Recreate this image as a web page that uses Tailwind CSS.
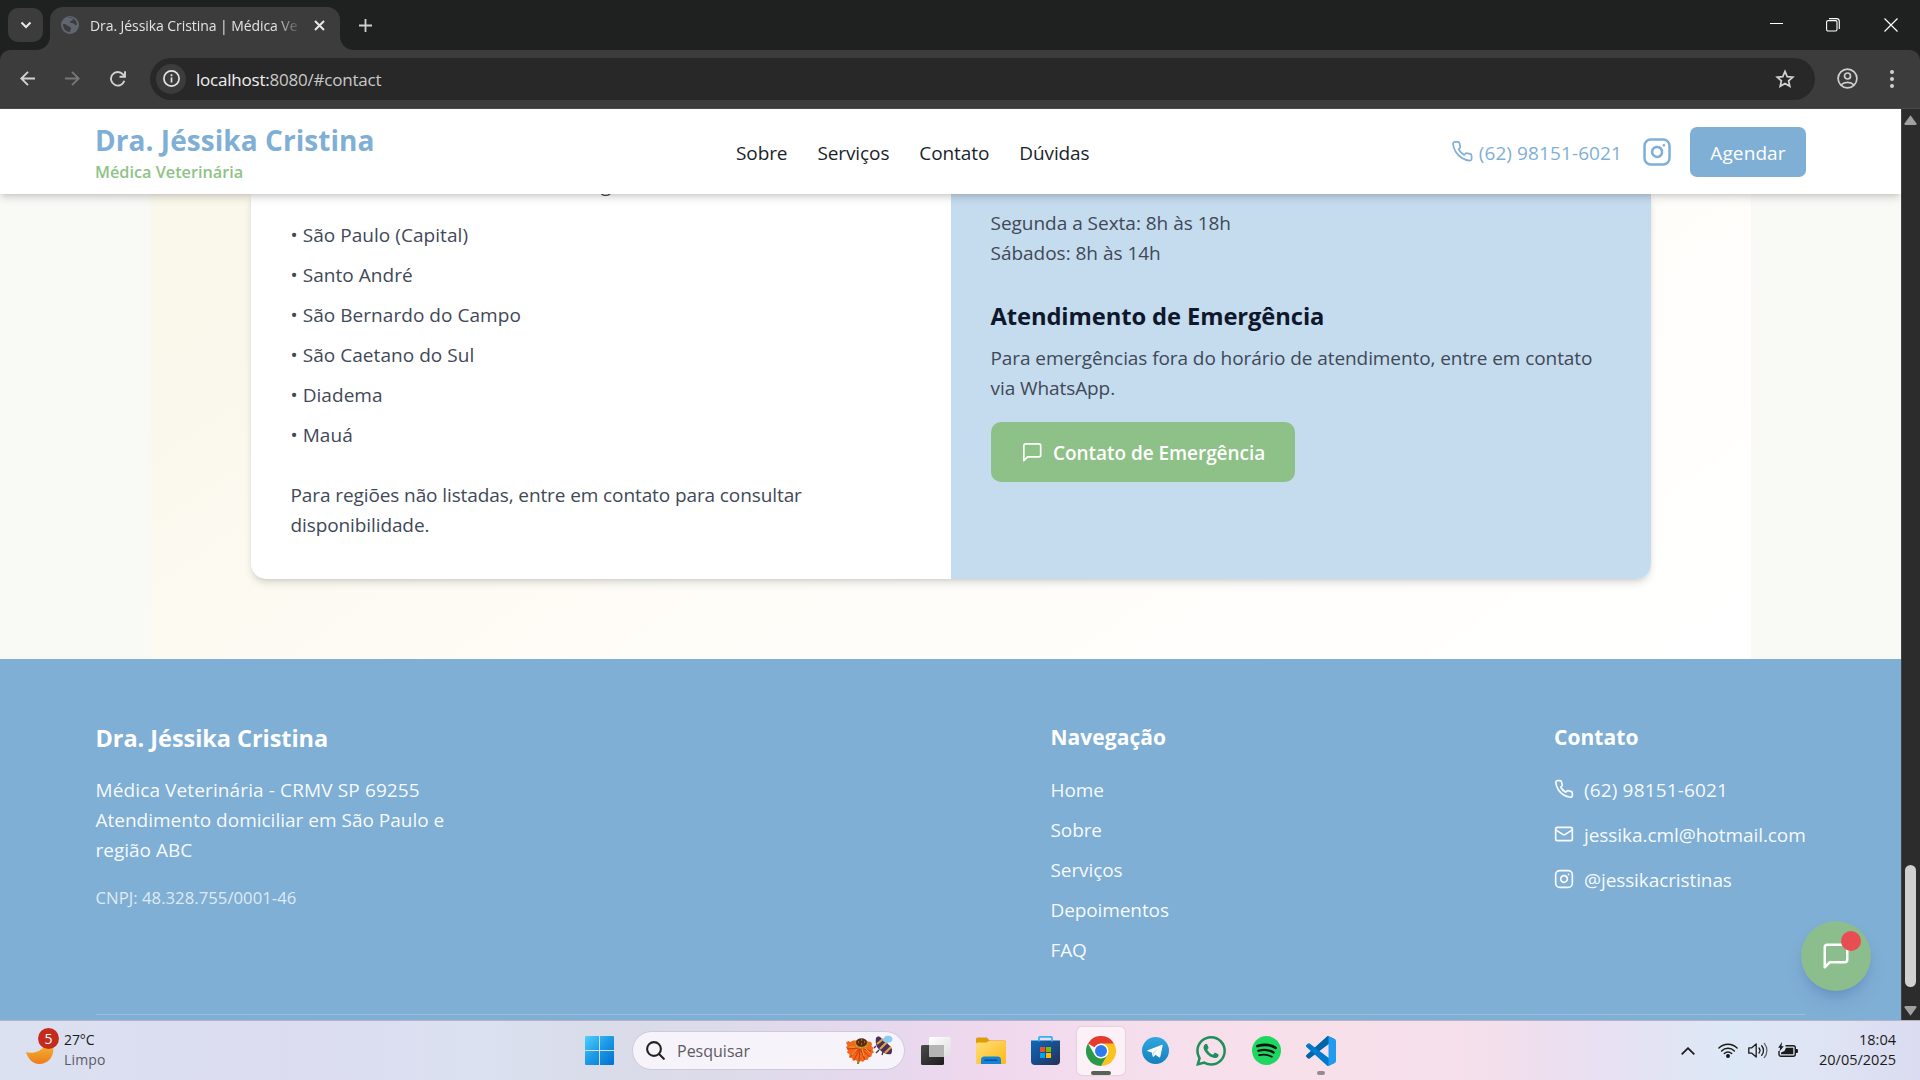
<!DOCTYPE html>
<html lang="pt-BR">
<head>
<meta charset="utf-8">
<title>Dra. Jéssika Cristina | Médica Veterinária</title>
<script src="https://cdn.jsdelivr.net/npm/@tailwindcss/browser@4"></script>
</head>
<body class="w-[1920px] h-[1080px] overflow-hidden flex flex-col font-['Open_Sans',sans-serif] bg-[#1f2120]">

<svg width="0" height="0" class="absolute">
  <defs>
    <symbol id="phone" viewBox="0 0 24 24"><path d="M22 16.92v3a2 2 0 0 1-2.18 2 19.79 19.79 0 0 1-8.63-3.07 19.5 19.5 0 0 1-6-6 19.79 19.79 0 0 1-3.07-8.67A2 2 0 0 1 4.11 2h3a2 2 0 0 1 2 1.72 12.84 12.84 0 0 0 .7 2.81 2 2 0 0 1-.45 2.11L8.09 9.91a16 16 0 0 0 6 6l1.27-1.27a2 2 0 0 1 2.11-.45 12.84 12.84 0 0 0 2.81.7A2 2 0 0 1 22 16.92z"/></symbol>
    <symbol id="insta" viewBox="0 0 24 24"><rect width="20" height="20" x="2" y="2" rx="5" ry="5"/><path d="M16 11.37A4 4 0 1 1 12.63 8 4 4 0 0 1 16 11.37z"/><path d="M17.5 6.5h.01"/></symbol>
    <symbol id="mail" viewBox="0 0 24 24"><rect width="20" height="16" x="2" y="4" rx="2"/><path d="m22 7-8.97 5.7a1.94 1.94 0 0 1-2.06 0L2 7"/></symbol>
    <symbol id="msg" viewBox="0 0 24 24"><path d="M21 15a2 2 0 0 1-2 2H7l-4 4V5a2 2 0 0 1 2-2h14a2 2 0 0 1 2 2z"/></symbol>
  </defs>
</svg>

<!-- Tab strip -->
<div class="h-[50px] shrink-0 flex items-end bg-[#1f2120] text-[#e3e3e3]">
  <div class="w-[50px] h-full relative">
    <button class="ml-2 mt-2 w-[35px] h-[34px] rounded-[10px] bg-[#3c3c3c] flex items-center justify-center">
      <svg class="w-[12px] h-[8px]" viewBox="0 0 12 8" fill="none" stroke="#e8e8e8" stroke-width="2"><path d="M1.5 1.5 6 6l4.500-4.500"/></svg>
    </button>
    <svg class="absolute right-0 bottom-0 w-[14px] h-[14px]" viewBox="0 0 14 14"><path d="M14 0v14H0C8 14 14 8 14 0z" fill="#3c3c3c"/></svg>
  </div>
  <div class="relative w-[290px] h-[43px] rounded-t-[13px] bg-[#3c3c3c] flex items-center pl-[11px] pb-[7px]">
    <svg class="w-[18px] h-[18px]" viewBox="0 0 18 18"><circle cx="9" cy="9" r="9" fill="#5f6670"/><path d="M2 8c2 0 4 .5 5 2 1 1 3 .5 3 2.500 0 1-1 1.500-1 3.500-4 0-7-3-7-8zM7 2c3-1 5 0 5 1.500 0 1.500-3 1-3 2.500 0 1.300 3 .8 4 2 .8 1 2 1 3 1 0-3-2-6-5-7.300" fill="#3c3c3c"/></svg>
    <div class="ml-[11px] w-[212px] pt-[1px] text-[14px] leading-[20px] tracking-[-0.07px] whitespace-nowrap overflow-hidden [mask-image:linear-gradient(90deg,#000_185px,transparent_212px)]">Dra. Jéssika Cristina | Médica Ve</div>
    <svg class="ml-[12px] w-[11px] h-[11px]" viewBox="0 0 11 11" stroke="#e8e8e8" stroke-width="2"><path d="m1 1 9 9M10 1l-9 9"/></svg>
    <svg class="absolute -right-[14px] bottom-0 w-[14px] h-[14px]" viewBox="0 0 14 14"><path d="M0 0v14h14C6 14 0 8 0 0z" fill="#3c3c3c"/></svg>
  </div>
  <div class="self-start mt-[19px] ml-[19px]"><svg class="w-[13px] h-[13px]" viewBox="0 0 13 13" stroke="#d0d0d0" stroke-width="1.800"><path d="M6.500 0v13M0 6.500h13"/></svg></div>
  <div class="self-start ml-auto mt-[18px] mr-[22px] flex items-center">
    <svg class="w-[13px] h-[14px]" viewBox="0 0 13 14" stroke="#fff" stroke-width="1"><path d="M0 5.500h13"/></svg>
    <svg class="ml-[43px] w-[14px] h-[14px]" viewBox="0 0 14 14" fill="none" stroke="#fff" stroke-width="1.100"><rect x=".6" y="2.600" width="10.400" height="10.400" rx="1.500"/><path d="M3 .6h7.500a2.800 2.800 0 0 1 2.800 2.800V11"/></svg>
    <svg class="ml-[44px] w-[14px] h-[14px]" viewBox="0 0 14 14" stroke="#fff" stroke-width="1.200"><path d="m.5.5 13 13M13.500.5l-13 13"/></svg>
  </div>
</div>

<!-- Toolbar -->
<div class="h-[59px] shrink-0 flex items-center pb-[1px] bg-[#3c3c3c] border-b border-[#4a4848] rounded-t-[10px]">
  <svg class="ml-[20px] w-[15px] h-[15px]" viewBox="0 0 15 15" fill="none" stroke="#d2d2d2" stroke-width="1.900"><path d="M15 7.500H1.500M8 .8 1.300 7.500 8 14.200"/></svg>
  <svg class="ml-[30px] w-[15px] h-[15px]" viewBox="0 0 15 15" fill="none" stroke="#777" stroke-width="1.900"><path d="M0 7.500h13.500M7 .8l6.700 6.700L7 14.200"/></svg>
  <svg class="ml-[30px] w-[16px] h-[16px]" viewBox="0 0 16 16" fill="none" stroke="#d2d2d2" stroke-width="1.900"><path d="M14.300 9.800A6.800 6.800 0 1 1 13 3.400l2 2.100M15 .3v5.500H9.500"/></svg>
  <div class="ml-[24px] w-[1665px] h-[42px] rounded-full bg-[#282828] flex items-center">
    <div class="ml-[6px] w-[30px] h-[30px] rounded-full bg-[#3c3c3c] flex items-center justify-center">
      <svg class="w-[17px] h-[17px]" viewBox="0 0 17 17" fill="none" stroke="#e3e3e3" stroke-width="1.700"><circle cx="8.500" cy="8.500" r="7.600"/><path d="M8.500 7.500v5M8.500 4.300v1.900"/></svg>
    </div>
    <div class="ml-[10px] pt-[2px] text-[17px] leading-[24px] tracking-[-0.22px] text-[#c8c8c8]"><span class="text-[#f0f0f0]">localhost:</span>8080/#contact</div>
    <svg class="ml-auto mr-[20px] w-[20px] h-[20px]" viewBox="0 0 20 20" fill="none" stroke="#d2d2d2" stroke-width="1.700"><path d="m10 2.400 2.200 5.200 5.600.5-4.200 3.700 1.200 5.500L10 14.400l-4.800 2.900 1.200-5.500-4.200-3.700 5.600-.5z"/></svg>
  </div>
  <svg class="ml-[22px] w-[21px] h-[21px]" viewBox="0 0 21 21" fill="none" stroke="#d0d0d0" stroke-width="1.700"><circle cx="10.500" cy="10.500" r="9.400"/><circle cx="10.500" cy="8" r="3"/><path d="M4 17c3.500-3.600 9.500-3.600 13 0"/></svg>
  <svg class="ml-[32px] w-[4px] h-[18px]" viewBox="0 0 4 18" fill="#d0d0d0"><circle cx="2" cy="2" r="2"/><circle cx="2" cy="9" r="2"/><circle cx="2" cy="16" r="2"/></svg>
</div>

<!-- Viewport -->
<div class="h-[911px] shrink-0 flex">
  <div class="relative w-[1901px] h-full overflow-hidden flex flex-col bg-[#f9f9f6] text-[19px] leading-[30px] tracking-[-0.1px]">

    <header class="relative z-10 h-[85px] shrink-0 bg-white shadow-[0_5px_8px_-1px_rgb(0_0_0/0.14),0_2px_5px_-2px_rgb(0_0_0/0.12)] pl-24 pr-[95px] grid grid-cols-[640px_1fr_auto] items-center">
      <div class="-ml-px pt-[3px]">
        <div class="text-[28px] leading-[38px] tracking-[0.05px] font-bold text-[#80afd5]">Dra. Jéssika Cristina</div>
        <div class="text-[16.25px] leading-[26px] tracking-normal font-semibold text-[#8ec387]">Médica Veterinária</div>
      </div>
      <nav class="flex gap-[30px] pt-[3px] text-[#1a1f2c]"><a>Sobre</a><a>Serviços</a><a>Contato</a><a>Dúvidas</a></nav>
      <div class="flex items-center pt-[1px]">
        <a class="flex items-center text-[#80afd5]"><svg class="w-[22.5px] h-[22.5px] -mt-[2px]" fill="none" stroke="currentColor" stroke-width="1.800" stroke-linecap="round" stroke-linejoin="round"><use href="#phone"/></svg><span class="ml-[5px] pt-[2px] tracking-[0.1px]">(62) 98151-6021</span></a>
        <svg class="ml-[20px] -mt-[1px] w-[30px] h-[30px] text-[#80afd5]" fill="none" stroke="currentColor" stroke-width="2" stroke-linecap="round" stroke-linejoin="round"><use href="#insta"/></svg>
        <button class="ml-[18px] w-[116px] h-[50px] pt-[1px] rounded-[7px] bg-[#80afd5] text-white tracking-[0.1px]">Agendar</button>
      </div>
    </header>

    <main class="h-[465px] shrink-0 flex justify-center">
      <section class="w-[1600px] h-full bg-[linear-gradient(145deg,#faf8ea_0%,#faf8ec_14%,#fdfaf2_30%,#fffdf9_58%,#ffffff_100%)]">
        <div class="mx-[100px] h-[385px] rounded-b-[15px] bg-white shadow-[0_5px_8px_-1px_rgb(0_0_0/0.12),0_2px_5px_-2px_rgb(0_0_0/0.12)] flex text-[#3f4957]">
          <div class="w-[700px] px-[40px]">
            <p class="-mt-[24px] tracking-[-0.43px]">Atendimento domiciliar em toda a região:</p>
            <ul class="mt-[20px] flex flex-col gap-[10px] tracking-[0.05px]">
              <li>• São Paulo (Capital)</li><li>• Santo André</li><li>• São Bernardo do Campo</li><li>• São Caetano do Sul</li><li>• Diadema</li><li>• Mauá</li>
            </ul>
            <p class="mt-[30px]">Para regiões não listadas, entre em contato para consultar<br>disponibilidade.</p>
          </div>
          <div class="flex-1 px-[40px] pt-[14px] rounded-br-[15px] bg-[#c5dbee]">
            <p class="tracking-[-0.02px]">Segunda a Sexta: 8h às 18h<br>Sábados: 8h às 14h</p>
            <h3 class="mt-[31px] text-[23.75px] leading-[35px] tracking-[-0.1px] font-bold text-[#0f172a]">Atendimento de Emergência</h3>
            <p class="mt-[9px] tracking-[-0.08px]">Para emergências fora do horário de atendimento, entre em contato<br>via WhatsApp.</p>
            <button class="mt-[19px] w-[304px] h-[60px] pl-[30px] flex items-center rounded-[10px] bg-[#8dc187] text-white font-semibold">
              <svg class="w-[22.5px] h-[22.5px]" fill="none" stroke="currentColor" stroke-width="1.800" stroke-linecap="round" stroke-linejoin="round"><use href="#msg"/></svg>
              <span class="ml-[10px] pt-[2px] tracking-[-0.05px]">Contato de Emergência</span>
            </button>
          </div>
        </div>
      </section>
    </main>

    <footer class="flex-1 min-h-0 bg-[#80afd5] text-white pl-[95.5px] pr-[95px] pt-[60px]">
      <div class="h-[296px] grid grid-cols-[955px_503.500px_1fr] border-b border-white/20">
        <div class="pt-[2px]">
          <h3 class="text-[23.5px] leading-[35px] tracking-[-0.05px] font-bold">Dra. Jéssika Cristina</h3>
          <p class="mt-[19px] text-white/95 tracking-normal"><span class="tracking-[0.12px]">Médica Veterinária - CRMV SP 69255</span><br>Atendimento domiciliar em São Paulo e<br>região ABC</p>
          <p class="mt-[20px] text-[16.700px] leading-[25px] tracking-[0.03px] text-white/75">CNPJ: 48.328.755/0001-46</p>
        </div>
        <div class="pt-[1px]">
          <h4 class="mb-[20px] text-[21px] leading-[35px] tracking-[0.05px] font-bold">Navegação</h4>
          <ul class="flex flex-col gap-[10px] text-white/95"><li>Home</li><li>Sobre</li><li>Serviços</li><li>Depoimentos</li><li>FAQ</li></ul>
        </div>
        <div class="pt-[1px]">
          <h4 class="mb-[20px] text-[21px] leading-[35px] tracking-[0.05px] font-bold">Contato</h4>
          <ul class="flex flex-col gap-[15px] text-white/95 whitespace-nowrap">
            <li class="flex items-center gap-[10px]"><svg class="-mt-[2px] w-5 h-5 shrink-0" fill="none" stroke="currentColor" stroke-width="2" stroke-linecap="round" stroke-linejoin="round"><use href="#phone"/></svg><span class="tracking-[0.15px]">(62) 98151-6021</span></li>
            <li class="flex items-center gap-[10px]"><svg class="-mt-[2px] w-5 h-5 shrink-0" fill="none" stroke="currentColor" stroke-width="2" stroke-linecap="round" stroke-linejoin="round"><use href="#mail"/></svg><span class="tracking-[-0.06px]">jessika.cml@hotmail.com</span></li>
            <li class="flex items-center gap-[10px]"><svg class="-mt-[2px] w-5 h-5 shrink-0" fill="none" stroke="currentColor" stroke-width="2" stroke-linecap="round" stroke-linejoin="round"><use href="#insta"/></svg><span>@jessikacristinas</span></li>
          </ul>
        </div>
      </div>
    </footer>

    <!-- Floating chat button -->
    <button class="absolute z-20 right-[30px] bottom-[29px] w-[70px] h-[70px] rounded-full bg-[#8cbd8c] text-white flex items-center justify-center shadow-[0_12px_18px_-3px_rgb(60_90_160/0.22),0_5px_8px_-4px_rgb(60_90_160/0.25)]">
      <svg class="w-[30px] h-[30px]" fill="none" stroke="currentColor" stroke-width="2" stroke-linecap="round" stroke-linejoin="round"><use href="#msg"/></svg>
      <span class="absolute top-[10px] right-[10px] w-5 h-5 rounded-full bg-[#e84e51]"></span>
    </button>
  </div>

  <!-- Scrollbar -->
  <div class="flex-1 bg-[#2c2c2c] border-l border-[#424242] flex flex-col items-center">
    <svg class="mt-[6px] w-[13px] h-[10px] mr-px" viewBox="0 0 13 10" fill="#a0a0a0"><path d="M6.500.3 12.500 8.500Q12.800 10 11.500 10h-10Q.2 10 .5 8.500z"/></svg>
    <div class="mt-[740px] w-[11px] h-[122px] rounded-full bg-[#d0d0d0] mr-px"></div>
    <svg class="mt-[19px] w-[13px] h-[10px] mr-px" viewBox="0 0 13 10" fill="#a0a0a0"><path d="M6.500 9.700.5 1.500Q.2 0 1.500 0h10q1.300 0 1 1.500z"/></svg>
  </div>
</div>

<!-- Taskbar -->
<div class="relative h-[60px] shrink-0 border-t border-[#b5b3c3] flex items-center bg-[linear-gradient(90deg,#dbe1f1_0%,#dcdcf0_15%,#dbe1f1_25%,#d9dce9_31%,#dddbea_38%,#e6d8ee_46%,#efd8ee_51%,#f6dfec_60%,#f8e0ea_70%,#f3dfec_78%,#e8e0f2_83%,#dde8f6_90%,#dfe4f4_95%,#dadbf0_100%)] text-[#1b1b1b]">
  <div class="w-[585px] h-full flex pl-[26px]">
    <div class="relative w-[38px] h-full">
      <svg class="absolute top-[25px] left-0 w-[28px] h-[18px]" viewBox="0 0 28 18"><defs><linearGradient id="mo" x1="0" y1="0" x2="0" y2="1"><stop offset="0" stop-color="#f5b32f"/><stop offset="1" stop-color="#ec7a1c"/></linearGradient></defs><path d="M0 6c6 2 15 0 18-6h9c2 9-4 18-14 18C7 18 2 13 0 6z" fill="url(#mo)"/></svg>
      <div class="absolute top-[7px] left-[12px] w-[21px] h-[21px] rounded-full bg-[#c42b1c] text-white text-[14px] leading-[21px] text-center">5</div>
    </div>
    <div class="pt-[9px] text-[14px] leading-[20px]"><div class="tracking-[-0.1px]">27°C</div><div class="text-[#5c5c66] tracking-[0.15px]">Limpo</div></div>
  </div>
  <svg class="w-[29px] h-[29px]" viewBox="0 0 29 29"><defs><linearGradient id="wn" x1="0" y1="0" x2="1" y2="1"><stop offset="0" stop-color="#4fd0fb"/><stop offset=".5" stop-color="#1b98e6"/><stop offset="1" stop-color="#0270d0"/></linearGradient></defs><path fill="url(#wn)" d="M1 0h13v14H0V1a1 1 0 0 1 1-1zM15 0h13a1 1 0 0 1 1 1v13H15zM0 15h14v14H1a1 1 0 0 1-1-1zM15 15h14v13a1 1 0 0 1-1 1H15z"/></svg>
  <div class="ml-[18px] -mt-px w-[273px] h-[39px] rounded-full bg-[#f6f3fa] border border-[#cfc9dc] flex items-center pl-[13px] pr-[11px]">
    <svg class="w-[19px] h-[19px]" viewBox="0 0 19 19" fill="none" stroke="#222" stroke-width="2.100" stroke-linecap="round"><circle cx="8" cy="8" r="6.900"/><path d="m13 13 4.800 4.800"/></svg>
    <span class="ml-[12px] text-[16px] leading-[24px] pt-[1px] text-[#5d5b62]">Pesquisar</span>
    <svg class="ml-auto w-[48px] h-[30px]" viewBox="0 0 48 30">
      <path d="M14 22c1 3-1 5-1 7" stroke="#5d8a2c" stroke-width="2" fill="none"/>
      <path d="M1 7.500 3.500 6l2 1L8 5.500h13l2 1 3 .500 1 2-.500 2 2 2-1 2 1.500 2.500-2 1-.500 3-2.500.500-1.500 3-2.500-.500L18 27l-2-1-3 1.500-2-2.500-3 1-1-3-3-.500.500-3-2.500-2L3 15l-2-2.500 1.500-2z" fill="#f0681c"/>
      <path d="M15 13 5 22M15 13l-6 12M15 13l-1 13M15 13l5 12M15 13l10 9M15 13l11 3M15 13 2 14" stroke="#cf3a14" stroke-width="1"/>
      <path d="M10 12 4 12M12 14l-5 6M17 14l2 7M20 13l5 5" stroke="#ff9a35" stroke-width="1"/>
      <ellipse cx="16.500" cy="9" rx="7" ry="5" fill="#c98a1f"/><ellipse cx="16.500" cy="7.500" rx="5.500" ry="4.200" fill="#5b2b14"/><path d="M13 7h1M16 5h1M19 7h1M16 9h1M11 11h1M15 12.500h1M20 11.500h1" stroke="#e5ac3c" stroke-width="1"/>
      <path d="M31 3c1-2 4-2 5 0l3 2 6 6c2 2 3 5 1 8-4 1-8-1-11-4-3-2-5-6-4-12z" fill="#4a2f5c"/><path d="m32 9 6-5M35 14l7-7M40 18l6-6" stroke="#e5a33d" stroke-width="2.200"/>
      <path d="M38 6c0-4 3-6 7-5 3 1 3 4 1 6-3 1-6 1-8-1z" fill="#8acaf5"/>
      <path d="m31 11-2 2M34 15l-3 3M38 17l-1 3" stroke="#4a2f5c" stroke-width="1.400"/>
    </svg>
  </div>
  <!-- Task view -->
  <div class="ml-[7px] w-12 h-12 flex items-center justify-center"><svg class="w-[30px] h-[28px]" viewBox="0 0 30 28"><defs><linearGradient id="tv" x1="0" y1="0" x2="1" y2="1"><stop offset="0" stop-color="#4b4b4b"/><stop offset="1" stop-color="#1c1c1c"/></linearGradient><linearGradient id="tw" x1="0" y1="0" x2="1" y2="1"><stop offset="0" stop-color="#fff"/><stop offset="1" stop-color="#dedede"/></linearGradient></defs><rect y="8" width="23" height="20" rx="1.500" fill="url(#tv)"/><rect x="8" y="0" width="22" height="20" rx="1.500" fill="url(#tw)"/><path d="M8 8h15v12H9.500A1.500 1.500 0 0 1 8 18.500z" fill="#b5b5b5"/></svg></div>
  <!-- Explorer -->
  <div class="ml-[7px] w-12 h-12 flex items-center justify-center"><svg class="w-[30px] h-[27px]" viewBox="0 0 30 27"><defs><linearGradient id="fo" x1="0" y1="0" x2="1" y2="1"><stop offset="0" stop-color="#ffde7c"/><stop offset="1" stop-color="#fdb913"/></linearGradient></defs><path d="M0 2a1.500 1.500 0 0 1 1.500-1.500H10q1 0 1.600.7L13.500 3.500H28.500A1.500 1.500 0 0 1 30 5v5H0z" fill="#dc9d09"/><path d="M0 7q0-1.500 1.500-1.500H10q1 0 2-1l.5-.6H28.500q1.500 0 1.500 1.500V25.500Q30 27 28.500 27h-27Q0 27 0 25.500z" fill="url(#fo)"/><path d="M5 27v-4a3.500 3.500 0 0 1 3.500-3.500h13A3.500 3.500 0 0 1 25 23v4z" fill="#1583d8"/><path d="M8.500 23.200h13" stroke="#0c4f94" stroke-width="1.400"/></svg></div>
  <!-- Store -->
  <div class="ml-[6px] mr-px w-12 h-12 flex items-center justify-center"><svg class="w-[29px] h-[29px]" viewBox="0 0 29 29"><defs><linearGradient id="st" x1="0" y1="0" x2="1" y2="1"><stop offset="0" stop-color="#0a6abf"/><stop offset="1" stop-color="#263056"/></linearGradient></defs><path d="M0 4.500h29V25a4 4 0 0 1-4 4H4a4 4 0 0 1-4-4z" fill="url(#st)"/><path d="M8 5.500V2q0-1.200 1.200-1.200h10.600Q21 .8 21 2v3.500" fill="none" stroke="#2ab8f2" stroke-width="1.800"/><path d="M9 11h5v5H9z" fill="#f25022"/><path d="M15 11h5v5h-5z" fill="#7fba00"/><path d="M9 17h5v5H9z" fill="#00a4ef"/><path d="M15 17h5v5h-5z" fill="#ffb900"/></svg></div>
  <!-- Chrome -->
  <div class="relative ml-[7px] w-12 h-12 rounded-[5px] bg-[#fcf1f7] shadow-[0_0_2px_rgb(0_0_0/0.2)] flex items-center justify-center">
    <svg class="w-[30px] h-[30px]" viewBox="0 0 48 48"><path d="M24 24 3.200 12A24 24 0 0 1 44.800 12z" fill="#e53a2e"/><path d="M24 12h20.800A24 24 0 0 1 24 48l10.400-18z" fill="#fcc31e"/><path d="M13.600 30 3.200 12A24 24 0 0 0 24 48l10.400-18z" fill="#2a9a48"/><circle cx="24" cy="24" r="12" fill="#fff"/><circle cx="24" cy="24" r="9.600" fill="#2f7bea"/></svg>
    <span class="absolute bottom-0 left-[14px] w-5 h-1 rounded-full bg-[#566354]"></span>
  </div>
  <!-- Telegram -->
  <div class="ml-[6px] mr-px w-12 h-12 flex items-center justify-center"><svg class="w-[27px] h-[27px]" viewBox="0 0 24 24"><defs><linearGradient id="tg" x1="0" y1="0" x2="0" y2="1"><stop offset="0" stop-color="#30a8e0"/><stop offset="1" stop-color="#1580bd"/></linearGradient></defs><circle cx="12" cy="12" r="12" fill="url(#tg)"/><path d="M5 11.800 17.300 7c.7-.2 1.200.2 1 1.100l-2 9.300c-.2.800-.7 1-1.300.6l-3-2.200-1.500 1.500c-.4.400-.9.300-1-.300l-.8-3.200-3.500-1.100c-.7-.2-.7-.7-.2-.9z" fill="#fff"/><path d="m9.500 14 5.500-4.500-4.500 5-.4 2.500z" fill="#b5d7ea"/></svg></div>
  <!-- WhatsApp -->
  <div class="ml-[7px] w-12 h-12 flex items-center justify-center"><svg class="w-[30px] h-[30px]" viewBox="0 0 24 24" fill="#1f8f5c"><path d="M17.472 14.382c-.297-.149-1.758-.867-2.030-.967-.273-.099-.471-.148-.670.150-.197.297-.767.966-.940 1.164-.173.199-.347.223-.644.075-.297-.150-1.255-.463-2.390-1.475-.883-.788-1.480-1.761-1.653-2.059-.173-.297-.018-.458.130-.606.134-.133.298-.347.446-.520.149-.174.198-.298.298-.497.099-.198.050-.371-.025-.520-.075-.149-.669-1.612-.916-2.207-.242-.579-.487-.500-.669-.510-.173-.008-.371-.010-.570-.010-.198 0-.520.074-.792.372-.272.297-1.040 1.016-1.040 2.479 0 1.462 1.065 2.875 1.213 3.074.149.198 2.096 3.200 5.077 4.487.709.306 1.262.489 1.694.625.712.227 1.360.195 1.871.118.571-.085 1.758-.719 2.006-1.413.248-.694.248-1.289.173-1.413-.074-.124-.272-.198-.570-.347m-5.421 7.403h-.004a9.870 9.870 0 01-5.031-1.378l-.361-.214-3.741.982.998-3.648-.235-.374a9.860 9.860 0 01-1.510-5.260c.001-5.450 4.436-9.884 9.888-9.884 2.640 0 5.122 1.030 6.988 2.898a9.825 9.825 0 012.893 6.994c-.003 5.450-4.437 9.884-9.885 9.884m8.413-18.297A11.815 11.815 0 0012.050 0C5.495 0 .160 5.335.157 11.892c0 2.096.547 4.142 1.588 5.945L.057 24l6.305-1.654a11.882 11.882 0 005.683 1.448h.005c6.554 0 11.890-5.335 11.893-11.893a11.821 11.821 0 00-3.480-8.413z"/></svg></div>
  <!-- Spotify -->
  <div class="ml-[7px] w-12 h-12 flex items-center justify-center"><svg class="w-[29px] h-[29px]" viewBox="0 0 24 24" fill="none" stroke="#111" stroke-linecap="round"><circle cx="12" cy="12" r="12" fill="#1ed760" stroke="none"/><path d="M4.500 8.300c5-1.500 11-.9 15 1.500" stroke-width="2.300"/><path d="M5.300 12.200c4.200-1.200 9-.7 12.600 1.400" stroke-width="1.900"/><path d="M5.900 15.900c3.600-1 7.400-.5 10.500 1.300" stroke-width="1.500"/></svg></div>
  <!-- VS Code -->
  <div class="relative ml-[7px] w-12 h-12 flex items-center justify-center"><svg class="w-[30px] h-[30px]" viewBox="0 0 100 100"><path d="M96.500 10.800 75.900.9a6.200 6.200 0 0 0-7.100 1.200L1.300 63.700a4.200 4.200 0 0 0 0 6.200l5.500 5a4.200 4.200 0 0 0 5.300.2L93.400 13.400c2.700-2 6.600-.1 6.600 3.300v-.2a6.300 6.300 0 0 0-3.500-5.700z" fill="#0065a9"/><path d="m96.500 89.200-20.600 9.900a6.200 6.200 0 0 1-7.100-1.200L1.300 36.300a4.200 4.200 0 0 1 0-6.200l5.500-5a4.200 4.200 0 0 1 5.300-.2l81.300 61.700c2.700 2 6.600.1 6.600-3.300v.2a6.300 6.300 0 0 1-3.500 5.700z" fill="#007acc"/><path d="M75.900 99.100a6.200 6.200 0 0 1-7.100-1.200c2.300 2.300 6.200.7 6.200-2.600V4.700c0-3.300-3.900-4.900-6.200-2.600a6.200 6.200 0 0 1 7.100-1.200l20.600 9.900a6.300 6.300 0 0 1 3.500 5.600v67.200a6.300 6.300 0 0 1-3.500 5.600z" fill="#1f9cf0"/></svg>
    <span class="absolute bottom-0 left-[20px] w-2 h-1 rounded-full bg-[#958a92]"></span>
  </div>

  <!-- Tray -->
  <div class="ml-auto mr-6 flex items-center">
    <svg class="w-[14px] h-[8px]" viewBox="0 0 14 8" fill="none" stroke="#1b1b1b" stroke-width="1.800"><path d="M.7 7.300 7 1.200l6.300 6.100"/></svg>
    <svg class="ml-[23px] -mt-[2px] w-[20px] h-[16px]" viewBox="0 0 20 16" fill="none" stroke="#1b1b1b" stroke-width="1.400" stroke-linecap="round"><path d="M.9 6.100a12.800 12.800 0 0 1 18.200 0M3.600 8.900a9 9 0 0 1 12.800 0M6.300 11.600a5.200 5.200 0 0 1 7.400 0"/><circle cx="10" cy="13.900" r="1.300" fill="#1b1b1b"/></svg>
    <svg class="ml-[10px] w-[20px] h-[17px]" viewBox="0 0 20 17" fill="none" stroke="#1b1b1b" stroke-width="1.300" stroke-linecap="round" stroke-linejoin="round"><path d="M.8 5.800h3L8.200 2v13l-4.400-3.800h-3z"/><path d="M11 6a4 4 0 0 1 0 5"/><path d="M13.700 3.700a7.300 7.300 0 0 1 0 9.600" /><path d="M16.300 1.400a11 11 0 0 1 0 14.200" stroke="#666"/></svg>
    <svg class="ml-[10px] -mt-[2px] w-[20px] h-[16px]" viewBox="0 0 20 16"><path d="M7.500 3.700h7.800a2 2 0 0 1 2 2v6.600a2 2 0 0 1-2 2H3a2 2 0 0 1-2-2V9" fill="none" stroke="#1b1b1b" stroke-width="1.400"/><path d="M8 5.700h7.300v6.600H3V10.500L6.500 9z" fill="#1b1b1b"/><path d="M18 7h.8q1.200 0 1.200 1.200v1.600Q20 11 18.800 11H18z" fill="#1b1b1b"/><path d="M4 0 .2 5.700h2L1.500 9.500l4.300-5.200H3.500z" fill="#1b1b1b"/></svg>
    <div class="w-[98px] pb-[1px] text-right text-[14.500px] leading-[20px]"><div>18:04</div><div>20/05/2025</div></div>
  </div>
</div>
</body>
</html>
